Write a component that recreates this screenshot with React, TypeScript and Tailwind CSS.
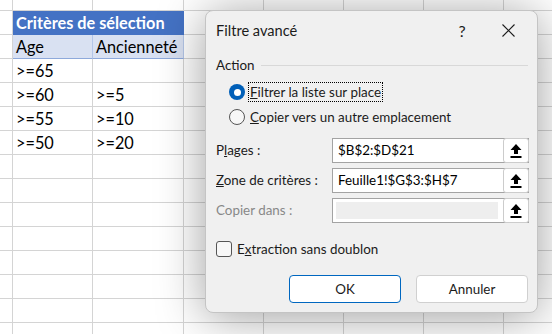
import React from "react";

const rows: string[][] = [
  ["", "", "", "", "", "", "", ""],
  ["", "H", "", "", "", "", "", ""],
  ["", "Age", "Ancienneté", "", "", "", "", ""],
  ["", ">=65", "", "", "", "", "", ""],
  ["", ">=60", ">=5", "", "", "", "", ""],
  ["", ">=55", ">=10", "", "", "", "", ""],
  ["", ">=50", ">=20", "", "", "", "", ""],
  ...Array.from({ length: 8 }, () => ["", "", "", "", "", "", "", ""]),
];

function Sheet() {
  return (
    <div className="grid grid-cols-[13px_80px_91px_80px_80px_80px_80px_80px] grid-rows-[11px_repeat(14,24px)] font-['Lato',sans-serif] text-[16.3px] text-black">
      {rows.map((r, ri) =>
        r.map((c, ci) => {
          if (ri === 1 && ci === 1) {
            return (
              <div
                key={ri + "-" + ci}
                className="col-span-2 bg-[#4472c4] text-white font-bold pl-[3px] leading-[24px] border-r border-b border-[#4472c4] whitespace-nowrap"
              >
                Critères de sélection
              </div>
            );
          }
          if (ri === 1 && ci === 2) return null;
          if (ri === 2 && (ci === 1 || ci === 2)) {
            return (
              <div
                key={ri + "-" + ci}
                className="bg-[#d9e1f2] pl-[3px] leading-[24px] border-r border-b border-r-[#b4c6e7] border-b-[#8ea9db] whitespace-nowrap"
              >
                {c}
              </div>
            );
          }
          return (
            <div
              key={ri + "-" + ci}
              className="border-r border-b border-[#d4d4d4] bg-white pl-[3px] leading-[23px] whitespace-nowrap overflow-hidden"
            >
              {c}
            </div>
          );
        })
      )}
    </div>
  );
}

function UploadIcon() {
  return (
    <svg width="12" height="14" viewBox="0 0 12 14">
      <path d="M6 0 L11.5 6 L8 6 L8 10 L4 10 L4 6 L0.5 6 Z" fill="#000" />
      <rect x="0.5" y="12" width="11" height="2" fill="#000" />
    </svg>
  );
}

function RefInput({ value, disabled }: { value?: string; disabled?: boolean }) {
  return (
    <div className="flex w-[197px] h-[25px] border border-[#a3a3a3] bg-white">
      {disabled ? (
        <div className="flex-1 m-[3px] mr-[5px] bg-[#eeeeee]" />
      ) : (
        <div className="flex-1 pl-[5px] leading-[23px] text-black whitespace-nowrap overflow-hidden">{value}</div>
      )}
      <div className="w-[26px] flex items-center justify-center bg-white border border-[#cccccc] rounded-[3px] -mt-px -mr-px h-[25px]">
        <UploadIcon />
      </div>
    </div>
  );
}

function Dialog() {
  return (
    <div className="absolute left-[205px] top-[10px] w-[333px] h-[303px] rounded-[8px] bg-[#f0f0f0] border border-[#c4c4c4] shadow-[0_4px_48px_rgba(0,0,0,0.38)] font-['Lato',sans-serif] text-[13.4px] text-[#1b1b1b] flex flex-col">
      {/* title bar */}
      <div className="flex items-center h-[39px] pl-[10px]">
        <span className="text-[14.6px]">Filtre avancé</span>
        <div className="ml-auto flex items-center mr-[6px]">
          <span className="w-[46px] text-center text-[16px]">?</span>
          <span className="w-[46px] flex justify-center">
            <svg width="13" height="13" viewBox="0 0 13 13">
              <path d="M0.5 0.5 L12.5 12.5 M12.5 0.5 L0.5 12.5" stroke="#1b1b1b" strokeWidth="1.1" />
            </svg>
          </span>
        </div>
      </div>

      {/* group */}
      <div className="flex items-center h-[20px] mt-[5px] pl-[10px] pr-[9px]">
        <span>Action</span>
        <div className="flex-1 h-px bg-[#d8d8d8] ml-[6px]" />
      </div>

      <div className="flex items-center h-[20px] mt-[7px] pl-[23px]">
        <span className="w-[16px] h-[16px] rounded-full bg-[#005fb8] flex items-center justify-center">
          <span className="w-[7px] h-[7px] rounded-full bg-white" />
        </span>
        <span className="ml-[3px] px-px border border-dotted border-black leading-[18px]">
          <span className="underline underline-offset-1">F</span>iltrer la liste sur place
        </span>
      </div>
      <div className="flex items-center h-[20px] mt-[5px] pl-[23px]">
        <span className="w-[16px] h-[16px] rounded-full border border-[#555555] bg-[#f7f7f7]" />
        <span className="ml-[5px]">
          <span className="underline underline-offset-1">C</span>opier vers un autre emplacement
        </span>
      </div>

      <div className="flex items-center mt-[11px] pl-[10px]">
        <span className="w-[116px]">
          P<span className="underline underline-offset-1">l</span>ages :
        </span>
        <RefInput value="$B$2:$D$21" />
      </div>
      <div className="flex items-center mt-[5px] pl-[10px]">
        <span className="w-[116px]">
          <span className="underline underline-offset-1">Z</span>one de critères :
        </span>
        <RefInput value="Feuille1!$G$3:$H$7" />
      </div>
      <div className="flex items-center mt-[5px] pl-[10px]">
        <span className="w-[116px] text-[#888888]">Copier dans :</span>
        <RefInput disabled />
      </div>

      <div className="flex items-center mt-[18px] pl-[10px] h-[16px]">
        <span className="w-[16px] h-[16px] rounded-[3px] border border-[#555555] bg-[#f7f7f7]" />
        <span className="ml-[5px]">
          E<span className="underline underline-offset-1">x</span>traction sans doublon
        </span>
      </div>

      <div className="flex justify-end gap-[15px] mt-[18px] pr-[9px]">
        <div className="w-[112px] h-[28px] flex items-center justify-center bg-white border border-[#0067c0] rounded-[4px]">
          OK
        </div>
        <div className="w-[112px] h-[28px] flex items-center justify-center bg-white border border-[#d0d0d0] rounded-[4px]">
          Annuler
        </div>
      </div>
    </div>
  );
}

export default function App() {
  return (
    <div className="relative w-[552px] h-[334px] overflow-hidden bg-white">
      <Sheet />
      <Dialog />
    </div>
  );
}
